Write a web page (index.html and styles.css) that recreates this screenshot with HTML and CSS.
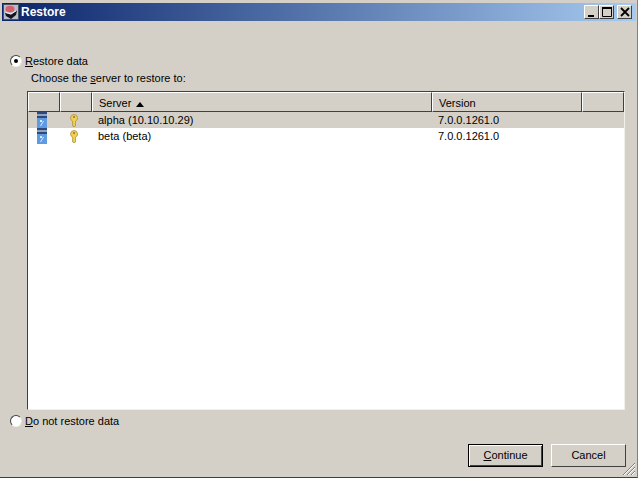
FILE: index.html
```html
<!DOCTYPE html>
<html lang="en">
<head>
<meta charset="utf-8">
<title>Restore</title>
<link rel="stylesheet" href="styles.css">
</head>
<body>
<div class="window">
  <header class="titlebar">
    <svg class="appicon" width="16" height="16" viewBox="0 0 16 16">
      <rect width="16" height="16" fill="#4a5064"/>
      <rect x="1" y="1" width="14" height="14" fill="#b9bcc6"/>
      <ellipse cx="7" cy="5" rx="4.5" ry="3.2" fill="#d8606c"/>
      <path d="M2 9l6 1.5 6-4-1 4.5-5 4-5-3z" fill="#14141c"/>
      <path d="M3 8.4l5 1.6 5-3.2" fill="none" stroke="#f0f0f4" stroke-width="1"/>
    </svg>
    <span class="title">Restore</span>
    <div class="winbtns">
      <button class="winbtn"><svg width="12" height="12" viewBox="0 0 12 12"><rect x="2" y="9" width="6" height="2" fill="#000"/></svg></button>
      <button class="winbtn"><svg width="12" height="12" viewBox="0 0 12 12"><path d="M1.5 2.5h9v8h-9z" fill="none" stroke="#000"/><rect x="1" y="1" width="10" height="2" fill="#000"/></svg></button>
      <button class="winbtn close"><svg width="12" height="12" viewBox="0 0 12 12"><path d="M2 2l8 8M10 2l-8 8" stroke="#000" stroke-width="1.8"/></svg></button>
    </div>
  </header>
  <main class="content">
    <label class="radio-row first">
      <span class="radio checked"></span>
      <span><u>R</u>estore data</span>
    </label>
    <p class="hint">Choose the <u>s</u>erver to restore to:</p>
    <div class="table">
      <div class="row head">
        <div class="hcell c1"></div>
        <div class="hcell c2"></div>
        <div class="hcell c3">Server <svg class="sort" width="8" height="5" viewBox="0 0 8 5"><path d="M4 0L8 5H0z" fill="#000"/></svg></div>
        <div class="hcell c4">Version</div>
        <div class="hcell c5"></div>
      </div>
      <div class="row data selected">
        <div class="cell c1"><svg class="srv" width="10" height="16" viewBox="0 0 10 16"><rect width="10" height="6" fill="#2f4a78"/><rect y="2" width="10" height="2" fill="#8fa3c0"/><rect y="6" width="10" height="10" fill="#5e9be0"/><path d="M3 14l3-5h1l-3 5zM3 8h2v2H3z" fill="#dce9fa"/></svg></div>
        <div class="cell c2"><svg class="key" width="8" height="13" viewBox="0 0 8 13"><path d="M4 .5a3.5 3.5 0 0 1 1.5 6.7V12L4 12.7 2.6 12V7.2A3.5 3.5 0 0 1 4 .5z" fill="#f0cf52" stroke="#a88a2c" stroke-width=".7"/><circle cx="4" cy="3" r="1" fill="#8a7430"/></svg></div>
        <div class="cell c3">alpha (10.10.10.29)</div>
        <div class="cell c4">7.0.0.1261.0</div>
      </div>
      <div class="row data">
        <div class="cell c1"><svg class="srv" width="10" height="16" viewBox="0 0 10 16"><rect width="10" height="6" fill="#2f4a78"/><rect y="2" width="10" height="2" fill="#8fa3c0"/><rect y="6" width="10" height="10" fill="#5e9be0"/><path d="M3 14l3-5h1l-3 5zM3 8h2v2H3z" fill="#dce9fa"/></svg></div>
        <div class="cell c2"><svg class="key" width="8" height="13" viewBox="0 0 8 13"><path d="M4 .5a3.5 3.5 0 0 1 1.5 6.7V12L4 12.7 2.6 12V7.2A3.5 3.5 0 0 1 4 .5z" fill="#f0cf52" stroke="#a88a2c" stroke-width=".7"/><circle cx="4" cy="3" r="1" fill="#8a7430"/></svg></div>
        <div class="cell c3">beta (beta)</div>
        <div class="cell c4">7.0.0.1261.0</div>
      </div>
    </div>
    <label class="radio-row second">
      <span class="radio"></span>
      <span><u>D</u>o not restore data</span>
    </label>
    <div class="actions">
      <button class="btn default"><u>C</u>ontinue</button>
      <button class="btn">Cancel</button>
    </div>
  </main>
  <svg class="grip" width="14" height="14" viewBox="0 0 14 14"><path d="M13 1L1 13M13 5L5 13M13 9L9 13" stroke="#808080" fill="none"/><path d="M13 2L2 13M13 6L6 13M13 10L10 13" stroke="#fff" fill="none"/></svg>
</div>
</body>
</html>
```
FILE: styles.css
```css
* { box-sizing: border-box; }
html, body { margin: 0; padding: 0; }
body { width: 638px; height: 478px; overflow: hidden; background: #d4d0c8; }
.window {
  position: relative;
  width: 638px;
  height: 478px;
  padding: 3px 1px 1px 2px;
  background: #d4d0c8;
  border-bottom: 1px solid #404040;
  border-right: 1px solid #808080;
  font: 11px/13px "Liberation Sans", Arial, sans-serif;
  color: #000;
  display: flex;
  flex-direction: column;
}
.titlebar {
  height: 18px;
  flex: none;
  display: flex;
  align-items: center;
  padding: 0 4px 0 1px;
  background: linear-gradient(90deg, #0a246a, #a6caf0);
}
.appicon { flex: none; }
.title { margin-left: 2px; color: #fff; font-weight: bold; font-size: 12px; flex: 1; }
.winbtns { display: flex; }
.winbtn {
  width: 15px;
  height: 14px;
  padding: 0;
  background: #d4d0c8;
  border: 1px solid;
  border-color: #fff #404040 #404040 #fff;
  display: flex;
  align-items: center;
  justify-content: center;
}
.winbtn.close { margin-left: 3px; }
.content { flex: 1; display: flex; flex-direction: column; padding: 0 11px 0 6px; }
.radio-row { display: flex; align-items: center; gap: 3px; height: 13px; }
.radio-row.first { margin-top: 34px; }
.radio-row.second { margin-top: 5px; }
.radio {
  width: 12px;
  height: 12px;
  flex: none;
  margin: -2px 0 0 2px;
  border-radius: 50%;
  background: #fff;
  border: 1px solid;
  border-color: #404040 #e8e6e0 #f4f4f0 #404040;
  display: flex;
  align-items: center;
  justify-content: center;
}
.radio.checked::after { content: ""; width: 4px; height: 4px; border-radius: 50%; background: #000; }
.hint { margin: 4px 0 6px 23px; }
.table {
  width: 598px;
  height: 319px;
  margin-left: 19px;
  flex: none;
  background: #fff;
  border: 1px solid;
  border-color: #404040 #f0efea #f0efea #404040;
}
.row { display: flex; }
.head { height: 20px; background: #d4d0c8; }
.hcell {
  height: 20px;
  padding: 4px 0 0 6px;
  border: 1px solid;
  border-color: #fff #404040 #404040 #fff;
}
.data { height: 16px; align-items: center; }
.data .c3, .data .c4 { padding-left: 6px; }
.selected { background: #d4d0c8; }
.c1 { width: 32px; }
.c2 { width: 32px; }
.cell.c1, .cell.c2 { display: flex; justify-content: center; }
.c3 { width: 340px; }
.c4 { width: 150px; }
.c5 { width: 42px; }
.srv { margin-left: -4px; }
.key { margin-left: -4px; }
.sort { margin-left: 2px; }
.actions { display: flex; justify-content: flex-end; gap: 8px; margin: 16px -1px 0 0; }
.btn {
  width: 75px;
  height: 23px;
  padding: 0;
  font: inherit;
  background: #d4d0c8;
  border: 1px solid;
  border-color: #fff #404040 #404040 #fff;
}
.btn.default { border-color: #000; box-shadow: inset 1px 1px #fff, inset -1px -1px #404040; }
.grip { position: absolute; right: 1px; bottom: 1px; }
```
